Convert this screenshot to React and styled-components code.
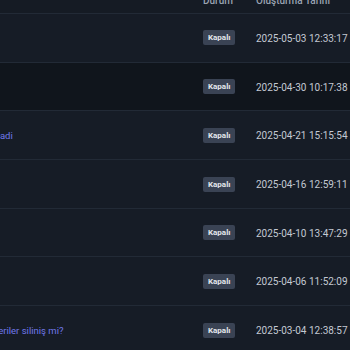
import React, { useLayoutEffect, useRef } from 'react';
import styled, { createGlobalStyle } from 'styled-components';

const Global = createGlobalStyle`
  html, body { margin: 0; padding: 0; background: #161c26; }
  body { font-family: Roboto, "Noto Sans", "DejaVu Sans", sans-serif; }
`;

const Viewport = styled.div`
  width: 350px;
  height: 350px;
  overflow: auto;
  background: #161c26;
  scrollbar-width: none;
  &::-webkit-scrollbar { display: none; }
`;

const TITLE_W = 377;
const STATUS_W = 53;
const DATE_W = 115;

const Table = styled.table`
  border-collapse: collapse;
  table-layout: fixed;
  width: ${TITLE_W + STATUS_W + DATE_W}px;
`;

const HeadCell = styled.th`
  height: 26px;
  padding: 0 0 0 12px;
  text-align: left;
  font-weight: 500;
  font-size: 10px;
  color: #9aa3b2;
  background: #151b24;
  border-bottom: 1px solid #222a36;
  white-space: nowrap;
`;

const Row = styled.tr`
  background: ${p => (p.$dim ? '#10151c' : '#161c26')};
  border-bottom: 1px solid #222a36;
`;

const Cell = styled.td`
  height: 47.7px;
  padding: 0 0 0 12px;
  vertical-align: middle;
  white-space: nowrap;
  overflow: hidden;
  line-height: 14px;
`;

const TitleLink = styled.a`
  color: #7179ea;
  font-size: 9.5px;
  text-decoration: none;
`;

const Badge = styled.span`
  display: inline-block;
  vertical-align: middle;
  padding: 2px 5px;
  line-height: 11px;
  font-size: 8px;
  font-weight: 700;
  color: #e4e7ec;
  background: #3a4354;
  border-radius: 2px;
`;

const DateText = styled.span`
  font-size: 10px;
  color: #c3c9d3;
`;

const rows = [
  { title: 'Ödeme sorunu', date: '2025-05-03 12:33:17' },
  { title: 'Sunucu erişim problemi', date: '2025-04-30 10:17:38', dim: true },
  { title: 'Ödeme yaptım ama hesabıma tanımlanmadi', date: '2025-04-21 15:15:54' },
  { title: 'Fatura talebi', date: '2025-04-16 12:59:11' },
  { title: 'Alan adı yönlendirme', date: '2025-04-10 13:47:29' },
  { title: 'SSL sertifikası', date: '2025-04-06 11:52:09' },
  { title: 'Sunucu taşıması sonrasında bütün eski veriler siliniş mi?', date: '2025-03-04 12:38:57' },
];

export default function App() {
  const ref = useRef(null);
  useLayoutEffect(() => {
    const el = ref.current;
    if (el) {
      el.scrollLeft = el.scrollWidth - 359;
      el.scrollTop = 13;
    }
  }, []);
  return (
    <>
      <Global />
      <Viewport ref={ref}>
        <Table>
          <colgroup>
            <col style={{ width: TITLE_W }} />
            <col style={{ width: STATUS_W }} />
            <col style={{ width: DATE_W }} />
          </colgroup>
          <thead>
            <tr>
              <HeadCell>Konu</HeadCell>
              <HeadCell>Durum</HeadCell>
              <HeadCell>Oluşturma Tarihi</HeadCell>
            </tr>
          </thead>
          <tbody>
            {rows.map((r, i) => (
              <Row key={i} $dim={r.dim}>
                <Cell><TitleLink href="#">{r.title}</TitleLink></Cell>
                <Cell><Badge>Kapalı</Badge></Cell>
                <Cell><DateText>{r.date}</DateText></Cell>
              </Row>
            ))}
          </tbody>
        </Table>
      </Viewport>
    </>
  );
}
